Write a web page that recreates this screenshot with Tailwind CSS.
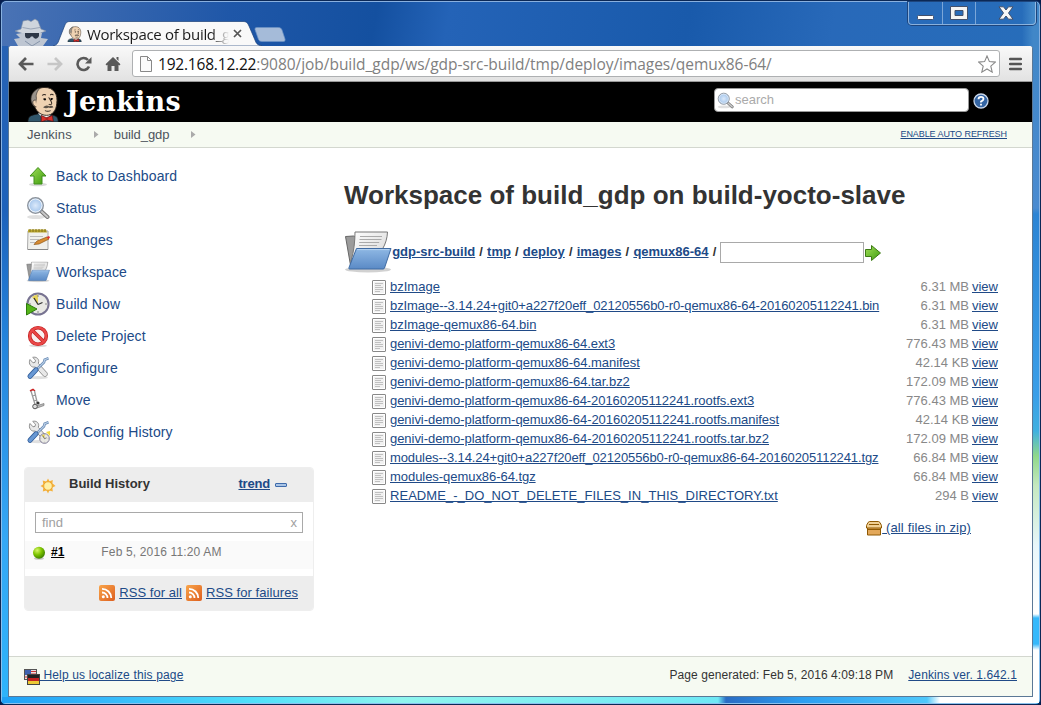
<!DOCTYPE html>
<html lang="en">
<head>
<meta charset="utf-8">
<title>Workspace of build_gdp</title>
<script src="https://cdn.jsdelivr.net/npm/@tailwindcss/browser@4"></script>
</head>
<body class="w-[1041px] h-[705px] overflow-hidden bg-[#061c4c] font-['Liberation_Sans',Arial,sans-serif] text-[13px] text-[#333]">
<svg class="absolute h-0 w-0">
  <defs>
    <linearGradient id="green" x1="0" y1="0" x2="1" y2="1"><stop offset="0" stop-color="#a2e05a"/><stop offset="1" stop-color="#3c9a0c"/></linearGradient>
    <linearGradient id="blue" x1="0" y1="0" x2="0" y2="1"><stop offset="0" stop-color="#8fb8e4"/><stop offset="1" stop-color="#5a8ac6"/></linearGradient>
    <linearGradient id="paper" x1="0" y1="0" x2="1" y2="1"><stop offset="0" stop-color="#fff"/><stop offset="1" stop-color="#d4d4d4"/></linearGradient>
    <linearGradient id="rssg" x1="0" y1="0" x2="1" y2="1"><stop offset="0" stop-color="#f9a54a"/><stop offset="1" stop-color="#dd5f1f"/></linearGradient>
    <radialGradient id="lens"><stop offset="0" stop-color="#dbe9fa"/><stop offset="1" stop-color="#9fc2ea"/></radialGradient>
    <radialGradient id="ball" cx=".35" cy=".3" r=".75"><stop offset="0" stop-color="#d8f56a"/><stop offset=".5" stop-color="#7dc400"/><stop offset="1" stop-color="#3b7d00"/></radialGradient>
    <symbol id="file" viewBox="0 0 14 15"><rect x=".5" y=".5" width="13" height="14" rx=".5" fill="#f1f1f1" stroke="#888"/><rect x="1.5" y="1.5" width="11" height="12" fill="none" stroke="#fff"/><path d="M3 3.500h8M3 5.500h6M3 7.500h8M3 9.500h8M3 11.500h5" stroke="#c0c0c0"/></symbol>
    <symbol id="folder" viewBox="0 0 48 42"><ellipse cx="24" cy="38.500" rx="23" ry="3" fill="#000" opacity=".18"/><path d="M1.500 5.500l8-.5 3 1L8 35l-1 2z" fill="#9b9b9b" stroke="#666"/><path d="M11 1h32.500c-.2 6-2 12-5 17L7 30C10 20 11 10 11 1z" fill="url(#paper)" stroke="#777"/><path d="M16 5.500h22M15.500 8.500h22M15.200 11.500h20M15 14.500h18" stroke="#aaa"/><path d="M12.500 17.500h34.500L40.500 37q-.3 1-1.500 1H5.500q-1 0-.5-1.500z" fill="url(#blue)" stroke="#3f6ba3"/><path d="M13.200 18.600h32" stroke="#b4d2f1"/></symbol>
    <symbol id="mag" viewBox="0 0 24 24"><ellipse cx="10" cy="21" rx="9" ry="2" fill="#000" opacity=".12"/><path d="M15.500 15.500l6 5.500" stroke="#777" stroke-width="4" stroke-linecap="round"/><path d="M15.500 15.500l6 5.500" stroke="#c8c8c8" stroke-width="2" stroke-linecap="round"/><circle cx="9.500" cy="9.500" r="7.800" fill="url(#lens)" stroke="#8f959d" stroke-width="1.400"/><circle cx="9.500" cy="9.500" r="6.500" fill="none" stroke="#eef3f9"/></symbol>
    <symbol id="tools" viewBox="0 0 24 24"><ellipse cx="12" cy="21.700" rx="10" ry="1.600" fill="#000" opacity=".12"/><path d="M4 3.500l3 3.300 2-.4.500-2.200L6.700 1.400c3-.9 6 .8 6 4l-.3 2 8.600 9.400c1.500 2-1.300 5-3.400 3.300L9.300 11C5.500 12 1.900 8.200 4 3.500z" fill="#e8e8e8" stroke="#909090"/><path d="M22.500 2.300l-3.800 1.400-.7 2.500-7 7" fill="none" stroke="#6486b0" stroke-width="2.600"/><path d="M22.500 2.300l-3.800 1.400-.7 2.500-7 7" fill="none" stroke="#b9cfe8" stroke-width="1.200"/><path d="M4 20.300l6-6.500" stroke="#35609c" stroke-width="5" stroke-linecap="round"/><path d="M4 20.300l6-6.500" stroke="#6898d4" stroke-width="3.400" stroke-linecap="round"/></symbol>
    <symbol id="rss" viewBox="0 0 16 16"><rect width="16" height="16" rx="2" fill="url(#rssg)"/><circle cx="4.300" cy="11.800" r="1.500" fill="#fff"/><path d="M3 7.500a5.500 5.500 0 0 1 5.500 5.500M3 3.800a9.300 9.300 0 0 1 9.300 9.200" fill="none" stroke="#fff" stroke-width="1.800"/></symbol>
    <symbol id="butler" viewBox="0 0 36 38"><path d="M1 38c0-5 2-7 8-8l10-2 9 3c4 1 5 3 5 7z" fill="#31566b" stroke="#161616" stroke-width=".8"/><path d="M12 29l8 8 5-7-2-4-8-1z" fill="#fff"/><path d="M7 18C2 8 9 2 18 1.500c11-.5 15 8 13.500 17C31 26 27 31 20.500 31 14 31 8.500 26 7 18z" fill="#efd2b2" stroke="#30261f"/><path d="M7 21c-5-6-3-14 4-18l3-1c-3 3-5 7-4 11l-1 6z" fill="#9a938b" stroke="#39322d" stroke-width=".7"/><path d="M9 15c-4-1-4 6 1 7" fill="#efd2b2" stroke="#39322d" stroke-width=".8"/><path d="M16 10q2-2 4-.5M24.500 9.500q2-1.500 3.500 0M17 14q2-1 3 0M25 13.500q1.500-.8 2.500 0M23 12c1 2 4 5 3 7-1 1-2 1-3 0M19 26q3 1.500 6 0" fill="none" stroke="#30261f" stroke-width="1.100"/><circle cx="19" cy="14.300" r="1"/><circle cx="26" cy="14" r="1"/><path d="M17 22.500q3.500-3.500 6.500-1 3-1.500 4.500 1-2.500 1.500-5 .2-3 1.500-6-.2z" fill="#5c5248"/><path d="M15 31l5.500 2.500L27 31l.8 6.500L21 36l-6 2z" fill="#d92f2b" stroke="#3b0d0d" stroke-width=".7"/><circle cx="21" cy="34.500" r="1.600" fill="#b01e1e"/></symbol>
    <symbol id="clock" viewBox="0 0 24 24"><circle cx="12" cy="12" r="10.600" fill="#e9e9e4" stroke="#777391" stroke-width="2"/><path d="M12 12L6 5q3-2.500 6-2.500z" fill="#e8d45a"/><path d="M12 12.500L8 6m4 6.500l4.500-2" stroke="#333" stroke-width="1.300"/><path d="M12 3v2M12 19v2M3 12h2M19 12h2" stroke="#888"/></symbol>
  </defs>
</svg>

<div class="flex h-full flex-col rounded-t-[6px] rounded-b-[5px] border border-[#0b2856] bg-[linear-gradient(180deg,#2662b4_0%,#1f6ec6_30%,#2a9cf0_60%,#2fb4fb_100%)] overflow-hidden">
 <div class="flex min-h-0 flex-1 flex-col rounded-[5px] border border-[#a3c4ea]/80 bg-[linear-gradient(90deg,transparent_0,transparent_1020px,#4187c8_1031px),linear-gradient(100deg,#4a73b5_0%,#1f57a8_22%,#1450a0_36%,#2463b7_43%,#195aab_66%,#2869b9_80%,#276dba_100%)] bg-no-repeat bg-[length:100%_46px] relative">

  <!-- window title bar -->
  <header class="flex h-[44px] shrink-0 items-end justify-between pl-[11px]">
    <div class="flex items-end">
      <svg class="h-[28px] w-[36px]" viewBox="0 0 36 28"><path d="M8 11l2-8 5-1 3 1.500L22 1l3 2 3 8 5 2-8 3H11l-9-3z" fill="#cfd5dd" stroke="#7c8ba3" stroke-width=".6"/><path d="M9.500 9.500q8 3 17.500 0" stroke="#9aa5b7" fill="none"/><path d="M9 15h20l-1 5 7 1-5 7H5l-4-7 6-1-4-4z" fill="#bec6d2"/><path d="M12 15h14v3c-2 4-5 3-6 .5h-2c-1 2.500-5 3-6-.5z" fill="#2d3747"/><path d="M12 23l7 5 8-5" stroke="#8694a9" fill="none"/></svg>
      <div class="relative ml-[3px] h-[25px] w-[210px]">
        <svg class="absolute inset-0 h-[25px] w-[210px]" viewBox="0 0 210 25"><path d="M1 25c4-1 5-3 6-6l5.500-14C14 1.500 15 .5 18 .5h173c3 0 4.500 1 6 4.500l6 14c1 3 2 5 7 6z" fill="#f9f9f9" stroke="#1b4179" stroke-width=".7"/></svg>
        <div class="relative flex h-full items-center pl-[15px]">
          <svg class="h-4 w-4"><use href="#butler"/></svg>
          <span class="ml-[4px] w-[146px] whitespace-nowrap font-['Open_Sans','Noto_Sans',sans-serif] text-[15px] leading-5 text-[#1b1b1b] tracking-[-0.3px] [mask-image:linear-gradient(90deg,#000_125px,transparent_142px)]">Workspace of build_g</span>
          <svg class="h-[9px] w-[9px]" viewBox="0 0 9 9"><path d="M1 1l7 7M8 1L1 8" stroke="#555" stroke-width="1.700"/></svg>
        </div>
      </div>
      <svg class="mb-[4px] ml-[-8px] h-[15px] w-[32px]" viewBox="0 0 32 15"><path d="M2.500 .5h22c2 0 3 1 3.500 2.500l3 9c.3 1.500 0 2.500-1.500 2.500H8c-2 0-3-.7-3.500-2L1 2.500Q.6 .5 2.500 .5z" fill="#a5bbd9" stroke="#6f93c4" stroke-width=".7"/></svg>
    </div>
    <div class="mr-[3px] flex h-[23px] self-start rounded-b-[4px] border border-t-0 border-[#b3cdec]/70 text-white shadow-[0_0_0_1px_#1d457d]">
      <div class="flex w-[34px] items-center justify-center border-r border-[#b3cdec]/60"><svg class="mt-[8px] h-[5px] w-[17px]" viewBox="0 0 17 5"><rect x=".5" y=".5" width="16" height="4" rx="1" fill="#fff" stroke="#43506b"/></svg></div>
      <div class="flex w-[33px] items-center justify-center border-r border-[#b3cdec]/60"><svg class="h-[14px] w-[18px]" viewBox="0 0 18 14"><path fill-rule="evenodd" d="M.5 .5h17v13H.5zM5 4.500h8v5H5z" fill="#f4f4f4" stroke="#43506b"/></svg></div>
      <div class="flex w-[59px] items-center justify-center"><svg class="h-[14px] w-[16px]" viewBox="0 0 16 14"><path d="M1 .8h4.500L8 4l2.500-3.200H15L10.500 7l4.500 6.200h-4.500L8 10l-2.500 3.200H1L5.500 7z" fill="#f7f7f7" stroke="#43506b"/></svg></div>
    </div>
  </header>

  <div class="flex min-h-0 flex-1">
   <div class="w-[6px] shrink-0 bg-[linear-gradient(180deg,#2662b4,#1d62bb_25%,#2484dc_45%,#35a7f5_75%,#2eb4fb)]"></div>

   <!-- browser client area -->
   <div class="flex h-[651px] w-[1025px] shrink-0 flex-col rounded-t-[3px] border-x border-b border-[#5b7896] bg-white">
    <div class="flex h-[36px] shrink-0 items-center rounded-t-[3px] border-b border-[#9a9a9a] bg-linear-to-b from-[#f9f9f9] to-[#e2e2e2] pl-[9px]">
      <svg class="h-[16px] w-[16px]" viewBox="0 0 16 16"><path d="M15.500 8H2.500M8 2L2 8l6 6" fill="none" stroke="#5a5a5a" stroke-width="2.700"/></svg>
      <svg class="ml-[13px] h-[16px] w-[16px]" viewBox="0 0 16 16"><path d="M.5 8h13M8 2l6 6-6 6" fill="none" stroke="#c6c6c6" stroke-width="2.700"/></svg>
      <svg class="ml-[13px] h-[16px] w-[16px]" viewBox="0 0 16 16"><path d="M13 10.500A6 6 0 1 1 12 4" fill="none" stroke="#5a5a5a" stroke-width="2.600"/><path d="M15.500 1v6.500H9z" fill="#5a5a5a"/></svg>
      <svg class="ml-[13px] h-[16px] w-[16px]" viewBox="0 0 16 16"><path d="M8 1l7.500 7.200-1.200 1.200-.8-.6V15h-4v-5h-3v5h-4V8.800l-.8.6L.5 8.200zM11.500 1h2v4l-2-2z" fill="#5a5a5a"/></svg>
      <div class="ml-[11px] flex h-[27px] w-[868px] items-center rounded-[3px] border border-[#aeb0b2] bg-white pl-[7px]">
        <svg class="h-[16px] w-[12px]" viewBox="0 0 12 16"><path d="M.5 .5h7l4 4v11H.5zM7.500 .5v4h4" fill="#fafafa" stroke="#888"/></svg>
        <span class="ml-[6px] w-[820px] whitespace-nowrap font-['Open_Sans','Noto_Sans',sans-serif] text-[15.5px] leading-6 text-[#808080] tracking-[-0.04px]"><span class="text-[#111] tracking-[-0.2px]">192.168.12.22</span>:9080/job/build_gdp/ws/gdp-src-build/tmp/deploy/images/qemux86-64/</span>
        <svg class="h-[18px] w-[18px] shrink-0" viewBox="0 0 18 18"><path d="M9 1l2.400 5.600 6 .5-4.600 4 1.400 6L9 14l-5.200 3.100 1.400-6-4.600-4 6-.5z" fill="#fff" stroke="#888" stroke-width="1.100"/></svg>
      </div>
      <svg class="ml-[9px] h-[14px] w-[13px]" viewBox="0 0 13 14"><path d="M1 2h11M1 7h11M1 12h11" stroke="#555" stroke-width="2.500" stroke-linecap="round"/></svg>
    </div>

    <div class="flex h-[40px] shrink-0 items-center bg-black pl-[18px]">
      <svg class="mt-[4px] h-[36px] w-[34px]"><use href="#butler"/></svg>
      <span class="ml-[5px] font-['DejaVu_Serif',serif] text-[27px] font-bold leading-[36px] tracking-[0.2px] text-white">Jenkins</span>
      <div class="ml-auto flex h-[24px] w-[255px] items-center rounded-[4px] border border-[#999] bg-white pl-[2px] mb-[4px]">
        <svg class="h-[17px] w-[17px]"><use href="#mag"/></svg><span class="ml-[1px] text-[#aaa]">search</span>
      </div>
      <svg class="ml-[4px] mr-[43px] mb-[3px] h-[16px] w-[16px]" viewBox="0 0 16 16"><circle cx="8" cy="8" r="7" fill="#3465a4" stroke="#c8d5e8" stroke-width="1.300"/><path d="M5.500 6.200Q5.500 3.800 8 3.800t2.500 2.200Q10.500 7.300 8 8.600v1M8 10.800v1.800" fill="none" stroke="#fff" stroke-width="1.800"/></svg>
    </div>

    <nav class="flex h-[26px] shrink-0 items-center border-b border-[#d3d7cf] bg-[#f6faf2] pl-[18px] text-[#4d545d]">
      <span class="tracking-[0.1px]">Jenkins</span>
      <svg class="ml-[22px] h-[7px] w-[5px]" viewBox="0 0 5 7"><path d="M0 0l4.500 3.500L0 7z" fill="#aaa"/></svg>
      <span class="ml-[15px] tracking-[-0.1px]">build_gdp</span>
      <svg class="ml-[22px] h-[7px] w-[5px]" viewBox="0 0 5 7"><path d="M0 0l4.500 3.500L0 7z" fill="#aaa"/></svg>
      <a class="ml-auto mr-[25px] text-[9px] text-[#204a87] underline tracking-[-0.07px]">ENABLE AUTO REFRESH</a>
    </nav>

    <div class="flex min-h-0 flex-1">
      <aside class="ml-[15px] w-[290px] shrink-0 pt-[12px]">
        <ul class="pl-[2px] text-[14px] tracking-[0.13px] text-[#204a87] [&>li]:flex [&>li]:h-8 [&>li]:items-center [&>li]:gap-[6px] [&>li>svg]:size-6">
          <li><svg viewBox="0 0 24 24"><ellipse cx="12" cy="20.500" rx="9" ry="1.800" fill="#000" opacity=".15"/><path d="M12 3.500l8 8.500h-4v8H8v-8H4z" fill="url(#green)" stroke="#3f8f1a"/></svg>Back to Dashboard</li>
          <li><svg><use href="#mag"/></svg>Status</li>
          <li><svg viewBox="0 0 24 24"><path d="M2 3h20v18.500H1.500z" fill="#f0f0ec" stroke="#aaa"/><path d="M2 1.500h18l1 3H2z" fill="#bba730"/><path d="M4 1v3M7 1v3M10 1v3M13 1v3M16 1v3M19 1v3" stroke="#807018"/><path d="M4 8.500h13M4 11.500h9M4 14.500h6" stroke="#bbb"/><path d="M2 21.500h20" stroke="#888"/><path d="M8 16.500l3-3.500 10-4 2 2-10 5z" fill="#d88c32" stroke="#8d5311" stroke-width=".7"/><path d="M20.500 9l2.500-1 1 1.500-1.500 1.700z" fill="#d33"/></svg>Changes</li>
          <li><svg viewBox="0 0 48 42"><use href="#folder"/></svg>Workspace</li>
          <li><svg viewBox="0 0 24 24"><use href="#clock"/><path d="M.5 11.500l10.500 5.500L.5 23z" fill="#55b41a" stroke="#2d7b0c"/></svg>Build Now</li>
          <li><svg viewBox="0 0 24 24"><ellipse cx="12" cy="21.700" rx="9" ry="1.500" fill="#000" opacity=".15"/><circle cx="12" cy="12" r="8.300" fill="#f9f1f1" stroke="#c22020" stroke-width="3.600"/><path d="M6 6l12 12" stroke="#c22020" stroke-width="3.600"/><circle cx="12" cy="12" r="8.300" fill="none" stroke="#ea4848" stroke-width="2.200"/><path d="M6 6l12 12" stroke="#ea4848" stroke-width="2.200"/></svg>Delete Project</li>
          <li><svg><use href="#tools"/></svg>Configure</li>
          <li><svg viewBox="0 0 24 24"><path d="M4 3l3-1.500 2 1.500" stroke="#c22" stroke-width="1.500" fill="none"/><path d="M5 3l4.500 15M8.500 3l3 13M6.500 8l3-1M8 13l3-1" stroke="#9a9a9a" stroke-width="1.300" fill="none"/><path d="M10 18l8-2.500v2L11 20z" fill="#bbb" stroke="#777" stroke-width=".7"/><circle cx="9" cy="18.500" r="2.300" fill="#ddd" stroke="#555"/><circle cx="12" cy="15" r="1.600" fill="#333"/></svg>Move</li>
          <li><svg viewBox="0 0 24 24"><use href="#tools"/><svg x="13" y="13" width="11" height="11"><use href="#clock"/></svg><path d="M20 12l4-1v5z" fill="#f2db3e"/></svg>Job Config History</li>
        </ul>

        <section class="mt-[19px] flex h-[144px] flex-col overflow-hidden rounded-[4px] border border-[#eee]">
          <div class="flex h-[34px] shrink-0 items-center bg-[#ededed] pl-[15px] text-[13px] font-bold">
            <svg class="mt-[1px] h-[16px] w-[16px]" viewBox="0 0 16 16"><path d="M8 .5l1.500 2.700L12.800 2l-.4 3.200 3.100 2.800-3.100 1.500.4 4-3.400-.9L8 15.500l-1.500-2.900-3.700.9.500-3.700L.5 8l2.800-1.800L2.700 2.500l3.700.9z" fill="#f5b23c"/><circle cx="8" cy="8" r="4.300" fill="#fff0a5" stroke="#eca632"/></svg>
            <span class="ml-[13px] h-[23px]">Build History</span>
            <a class="ml-auto h-[23px] text-[#204a87] underline tracking-[-0.2px]">trend</a>
            <svg class="ml-[5px] mr-[26px] h-[4px] w-[12px]" viewBox="0 0 12 4"><rect x=".5" y=".5" width="11" height="3" rx=".5" fill="#a9c4e6" stroke="#3f6bab"/></svg>
          </div>
          <div class="mx-[10px] mt-[10px] flex h-[21px] shrink-0 items-center justify-between border border-[#a9a9a9] px-[6px] text-[#a0a0a0]"><span>find</span><span class="mr-[-1px]">x</span></div>
          <div class="mt-[8px] flex h-[28px] shrink-0 items-center bg-[#fafafa] pb-[6px] pl-[7px]">
            <svg class="mt-[1px] h-[14px] w-[14px]" viewBox="0 0 14 14"><ellipse cx="7" cy="12.500" rx="5" ry="1.300" fill="#000" opacity=".2"/><circle cx="7" cy="6.700" r="6" fill="url(#ball)"/></svg>
            <a class="ml-[5px] text-[12px] font-bold text-black underline">#1</a>
            <span class="ml-[37px] text-[12px] text-[#777] tracking-[0.15px]">Feb 5, 2016 11:20 AM</span>
          </div>
          <div class="mt-auto flex h-[34px] shrink-0 items-center justify-end bg-[#ededed] pr-[15px] text-[#204a87] tracking-[0.06px]">
            <svg class="h-4 w-4"><use href="#rss"/></svg><a class="ml-1 underline">RSS for all</a>
            <svg class="ml-1 h-4 w-4"><use href="#rss"/></svg><a class="ml-1 underline">RSS for failures</a>
          </div>
        </section>
      </aside>

      <main class="ml-[30px] w-[655px] pt-[30px]">
        <h1 class="h-[34px] whitespace-nowrap text-[26px] font-bold leading-[34px]">Workspace of build_gdp on build-yocto-slave</h1>
        <div class="mt-[18px] flex h-[44px] items-center gap-[4.150px] font-bold [&>a]:text-[#204a87] [&>a]:underline">
          <svg class="mr-[-4px] h-[42px] w-[48px]"><use href="#folder"/></svg>
          <a>gdp-src-build</a><span>/</span><a>tmp</a><span>/</span><a>deploy</a><span>/</span><a>images</a><span>/</span><a>qemux86-64</a><span>/</span>
          <span class="h-[21px] w-[144px] border border-[#a9a9a9] bg-white"></span>
          <svg class="ml-[-4px] mt-[2px] h-4 w-4" viewBox="0 0 16 16"><path d="M.5 4.500h6v-4L15.500 8l-9 7.500v-4h-6z" fill="url(#green)" stroke="#3d7a16"/></svg>
        </div>
        <div class="mt-[3px] ml-[28px] w-[626px] leading-[19px] [&>div]:flex [&>div]:h-[19px] [&>div]:items-center [&_a]:whitespace-nowrap [&_a]:text-[#204a87] [&_a]:underline [&_span]:ml-auto [&_span]:mr-[3px] [&_span]:text-[#888] [&_svg]:mr-[4px] [&_svg]:mt-[2px] [&_svg]:h-[15px] [&_svg]:w-[14px]">
          <div><svg><use href="#file"/></svg><a>bzImage</a><span>6.31 MB</span><a>view</a></div>
          <div><svg><use href="#file"/></svg><a class="tracking-[-0.1px]">bzImage--3.14.24+git0+a227f20eff_02120556b0-r0-qemux86-64-20160205112241.bin</a><span>6.31 MB</span><a>view</a></div>
          <div><svg><use href="#file"/></svg><a class="tracking-[-0.05px]">bzImage-qemux86-64.bin</a><span>6.31 MB</span><a>view</a></div>
          <div><svg><use href="#file"/></svg><a class="tracking-[-0.05px]">genivi-demo-platform-qemux86-64.ext3</a><span>776.43 MB</span><a>view</a></div>
          <div><svg><use href="#file"/></svg><a class="tracking-[-0.04px]">genivi-demo-platform-qemux86-64.manifest</a><span>42.14 KB</span><a>view</a></div>
          <div><svg><use href="#file"/></svg><a class="tracking-[-0.04px]">genivi-demo-platform-qemux86-64.tar.bz2</a><span>172.09 MB</span><a>view</a></div>
          <div><svg><use href="#file"/></svg><a class="tracking-[-0.06px]">genivi-demo-platform-qemux86-64-20160205112241.rootfs.ext3</a><span>776.43 MB</span><a>view</a></div>
          <div><svg><use href="#file"/></svg><a class="tracking-[-0.05px]">genivi-demo-platform-qemux86-64-20160205112241.rootfs.manifest</a><span>42.14 KB</span><a>view</a></div>
          <div><svg><use href="#file"/></svg><a class="tracking-[-0.05px]">genivi-demo-platform-qemux86-64-20160205112241.rootfs.tar.bz2</a><span>172.09 MB</span><a>view</a></div>
          <div><svg><use href="#file"/></svg><a class="tracking-[-0.1px]">modules--3.14.24+git0+a227f20eff_02120556b0-r0-qemux86-64-20160205112241.tgz</a><span>66.84 MB</span><a>view</a></div>
          <div><svg><use href="#file"/></svg><a class="tracking-[-0.05px]">modules-qemux86-64.tgz</a><span>66.84 MB</span><a>view</a></div>
          <div><svg><use href="#file"/></svg><a class="tracking-[0.04px]">README_-_DO_NOT_DELETE_FILES_IN_THIS_DIRECTORY.txt</a><span>294 B</span><a>view</a></div>
        </div>
        <div class="mt-[12px] flex h-[21px] w-[627px] items-center justify-end text-[#204a87]">
          <svg class="mt-[2px] h-[15px] w-4" viewBox="0 0 16 15"><path d="M1.500 6h13v8h-13z" fill="#e3a85a" stroke="#8f5902"/><path d="M2 1.500L3.500 .5h9L14 1.500l1.500 3V7H.5V4.500z" fill="#f0cf94" stroke="#8f5902"/><path d="M3 3.500h10M2 8.500h12" stroke="#8f5902" stroke-width="1"/></svg><a class="whitespace-pre underline tracking-[0.15px]"> (all files in zip)</a>
        </div>
      </main>
    </div>

    <footer class="flex h-[40px] shrink-0 items-center border-t border-[#d3d7cf] bg-[#f6faf2] px-[15px] pb-[3px] text-[12px]">
      <svg class="mt-[3px] h-4 w-4" viewBox="0 0 16 16"><rect x=".5" y=".5" width="12" height="10" fill="#e9e2e2" stroke="#555"/><path d="M1 1h6v5H1z" fill="#3f62b0"/><path d="M7 2.500h5M7 5h5M1 8h11" stroke="#c33"/><rect x="3.500" y="5.500" width="12" height="10" fill="#c32222" stroke="#444"/><path d="M4 6h11v3H4z" fill="#222"/><path d="M4 12h11v3H4z" fill="#ecc935"/></svg>
      <a class="whitespace-pre text-[#204a87] underline tracking-[0.15px]"> Help us localize this page</a>
      <span class="ml-auto tracking-[0.08px]">Page generated: Feb 5, 2016 4:09:18 PM</span>
      <a class="ml-[15px] text-[#204a87] underline tracking-[0.1px]">Jenkins ver. 1.642.1</a>
    </footer>
   </div>
   <div class="flex-1 bg-[linear-gradient(180deg,#4187c8_0,#4a8bd0_162px,#2c84d4_168px,#3a9ee8_350px,#3fb0e0_385px,#8fd88a_410px,#c5e8c0_440px,#e8f6fa_500px,#fff_568px,#35b8fb_572px,#35b8fb_598px,#fff_604px)]"></div>
  </div>
  <div class="absolute inset-x-0 bottom-0 h-[6px] bg-[linear-gradient(90deg,#1fa0f5_0,#34b8fa_100px,#4fe0fa_250px,#8ff5ee_400px,#6fe8f5_716px,#2a6cc4_724px,#2c9ef0_800px,#4fc8fb_925px,#fff_938px)]"></div>
 </div>
</div>
</body>
</html>
